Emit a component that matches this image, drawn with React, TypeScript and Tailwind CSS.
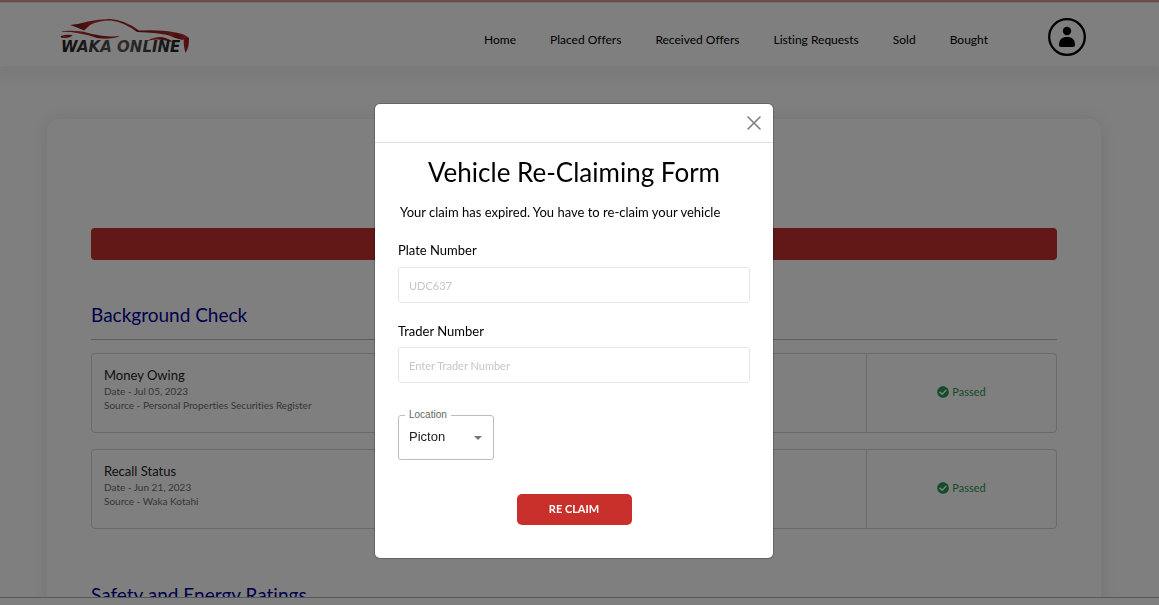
import { useState } from 'react';
import { FaCheckCircle } from 'react-icons/fa';

const NAV_LINKS = ['Home', 'Placed Offers', 'Received Offers', 'Listing Requests', 'Sold', 'Bought'];

const CHECKS = [
  { title: 'Money Owing', date: 'Jul 05, 2023', source: 'Personal Properties Securities Register' },
  { title: 'Recall Status', date: 'Jun 21, 2023', source: 'Waka Kotahi' },
];

const LOCATIONS = ['Picton', 'Nelson', 'Blenheim'];

function Logo() {
  return (
    <svg viewBox="0 0 130 42" className="h-[42px] w-[130px]" role="img" aria-label="Waka Online">
      <defs>
        <linearGradient id="body" x1="0" x2="1" y1="0" y2="0">
          <stop offset="0" stopColor="#6e1010" />
          <stop offset="0.25" stopColor="#c03030" />
          <stop offset="0.6" stopColor="#8a1a1a" />
          <stop offset="1" stopColor="#c23434" />
        </linearGradient>
        <linearGradient id="word" x1="0" x2="1" y1="0" y2="0">
          <stop offset="0" stopColor="#1c1c1c" />
          <stop offset="0.5" stopColor="#5c5c5c" />
          <stop offset="1" stopColor="#1c1c1c" />
        </linearGradient>
      </defs>
      <g fill="url(#body)">
        <path d="M10 11 Q20 10 28 7.500 Q38 5 50 5 Q64 5.500 79 16.500 Q100 15.500 113 18 Q125 19.500 129 24 L129 26 Q121 26 112 22 Q98 18.500 77 18 Q64 8 51 6.500 Q38 6.500 30 11 Q27 14 24 16.500 Q17 13 10 11Z" />
        <path d="M2 17 Q20 15.500 32 20 Q46 23.500 60 22 Q52 26 37 24 Q20 18 2 17.500Z" />
        <path d="M1 22 Q5 20 13 21 Q10 24.500 3 24 Q0 23.500 1 22Z" />
        <path d="M87 27 Q93 23 101 23 Q109 24 114 28.500 Q103 25.500 97 25.500 Q91 25.500 87 27Z" />
        <path d="M106 19.500 Q118 18.500 125 23 L123 26 Q114 24.500 106 19.500Z" />
        <path d="M124 24 L129 24 Q129.500 33 125.500 39 Q123 31 124 24Z" />
      </g>
      <text
        x="1"
        y="38"
        fill="url(#word)"
        className="font-['DejaVu_Sans',sans-serif] text-[15px] font-bold italic"
      >
        WAKA ONLINE
      </text>
    </svg>
  );
}

function ProfileIcon() {
  return (
    <svg viewBox="0 0 38 38" className="h-[38px] w-[38px]" aria-hidden="true">
      <circle cx="19" cy="19" r="17.800" fill="none" stroke="black" strokeWidth="2.300" />
      <circle cx="19" cy="13" r="4.200" fill="black" />
      <path d="M11 27 C11 21.500 14 19 19 19 C24 19 27 21.500 27 27 Q27 29 25 29 H13 Q11 29 11 27Z" fill="black" />
    </svg>
  );
}

function Header() {
  return (
    <header className="relative z-10 flex h-[66px] shrink-0 items-start border-t-2 border-[#d0a090] bg-white pr-[73px] pl-[60px] shadow-[inset_0_1px_0_#f4d8c8,0_6px_18px_6px_rgba(0,0,0,0.06)]">
      <a href="#home" className="mt-3">
        <Logo />
      </a>
      <nav className="mt-7 ml-auto flex gap-[34px] text-[12px] leading-5 text-black">
        {NAV_LINKS.map((link) => (
          <a key={link} href="#nav">
            {link}
          </a>
        ))}
      </nav>
      <button type="button" aria-label="Account" className="mt-4 ml-[60px]">
        <ProfileIcon />
      </button>
    </header>
  );
}

function CheckRow({ title, date, source }: { title: string; date: string; source: string }) {
  return (
    <div className="flex h-20 rounded border border-[#d4d4d4]">
      <div className="flex-1 px-3 pt-3">
        <h3 className="text-[13px] leading-[18px] text-[#222]">{title}</h3>
        <p className="text-[10px] leading-[14px] text-[#6c6c6c]">Date - {date}</p>
        <p className="text-[10px] leading-[14px] text-[#6c6c6c]">Source - {source}</p>
      </div>
      <div className="flex w-[190px] items-center justify-center gap-[3px] border-l border-[#d4d4d4] pb-0.5 text-[11px] text-[#2a9454]">
        <FaCheckCircle size={12} />
        Passed
      </div>
    </div>
  );
}

function ReclaimModal({ onClose }: { onClose: () => void }) {
  const [plate, setPlate] = useState('');
  const [trader, setTrader] = useState('');
  const [location, setLocation] = useState('Picton');

  return (
    <div className="fixed inset-0 z-20 flex items-start justify-center bg-black/50 pt-[104px] pr-[11px]">
      <div
        role="dialog"
        aria-modal="true"
        aria-labelledby="modal-title"
        className="w-full max-w-[398px] rounded-[5px] bg-white shadow-[0_0_0_1px_rgba(0,0,0,0.2)]"
      >
        <div className="flex h-[39px] items-center justify-end border-b border-[#dee2e6] pr-3">
          <button type="button" aria-label="Close" onClick={onClose}>
            <svg viewBox="0 0 14 14" className="h-[14px] w-[14px]" stroke="#808080" strokeWidth="1.600" strokeLinecap="round">
              <path d="M1 1L13 13M13 1L1 13" />
            </svg>
          </button>
        </div>

        <form className="px-[23px] pt-[11px] pb-[33px] text-black" onSubmit={(e) => e.preventDefault()}>
          <h2 id="modal-title" className="text-center text-[26px] leading-9">
            Vehicle Re-Claiming Form
          </h2>
          <p className="mt-3 pl-0.5 text-[13px] leading-5">
            Your claim has expired. You have to re-claim your vehicle
          </p>

          <label htmlFor="plate" className="mt-[18px] block text-[13px] leading-5">
            Plate Number
          </label>
          <input
            id="plate"
            className="mt-[7px] block h-9 w-full rounded-[3px] border border-[#e6e6e6] px-2.5 text-[11px] placeholder:text-[#c4c6c8]"
            placeholder="UDC637"
            value={plate}
            onChange={(e) => setPlate(e.target.value)}
          />

          <label htmlFor="trader" className="mt-[18px] block text-[13px] leading-5">
            Trader Number
          </label>
          <input
            id="trader"
            className="mt-[6px] block h-9 w-full rounded-[3px] border border-[#e6e6e6] px-2.5 text-[11px] placeholder:text-[#c4c6c8]"
            placeholder="Enter Trader Number"
            value={trader}
            onChange={(e) => setTrader(e.target.value)}
          />

          <div className="relative mt-8 h-[45px] w-24 font-['Liberation_Sans',sans-serif]">
            <select
              id="location"
              className="h-full w-full appearance-none rounded-[3px] border border-[#bdbdbd] bg-white pr-6 pb-0.5 pl-2.5 text-[13px] text-[#212121]"
              value={location}
              onChange={(e) => setLocation(e.target.value)}
            >
              {LOCATIONS.map((l) => (
                <option key={l}>{l}</option>
              ))}
            </select>
            <label htmlFor="location" className="absolute -top-1.5 left-[7px] bg-white px-1 text-[10px] leading-3 text-[#666]">
              Location
            </label>
            <svg viewBox="0 0 8 4" className="pointer-events-none absolute top-[21px] right-3 h-1 w-2" fill="#757575">
              <path d="M0 0H8L4 4Z" />
            </svg>
          </div>

          <button
            type="submit"
            className="mx-auto mt-[34px] block h-[31px] w-[115px] rounded-[5px] bg-[#c9302c] text-[11px] font-bold text-white"
          >
            RE CLAIM
          </button>
        </form>
      </div>
    </div>
  );
}

export default function App() {
  const [open, setOpen] = useState(true);

  return (
    <div className="flex h-screen flex-col overflow-hidden bg-white font-['Lato',sans-serif] [font-variant-ligatures:none]">
      <Header />

      <main className="min-h-0 flex-1 overflow-hidden pt-[53px] pr-[58px] pl-[47px]">
        <section className="min-h-full rounded-t-xl bg-white px-11 pt-[109px] shadow-[0_0_20px_rgba(0,0,0,0.1)]">
          <div className="h-8 rounded bg-[#c4302e]" />

          <h2 className="mt-10 border-b border-[#b8b8b8] pb-[9px] text-[19px] leading-[30px] text-[#000098]">
            Background Check
          </h2>
          <div className="mt-[13px] flex flex-col gap-4">
            {CHECKS.map((check) => (
              <CheckRow key={check.title} {...check} />
            ))}
          </div>

          <h2 className="mt-[51px] text-[19px] leading-[30px] text-[#000098]">Safety and Energy Ratings</h2>
        </section>
      </main>

      {/* Bottom strip */}
      <footer className="relative h-2 shrink-0 border-t border-[#b0b0b0] bg-white" />

      {open && <ReclaimModal onClose={() => setOpen(false)} />}
    </div>
  );
}
